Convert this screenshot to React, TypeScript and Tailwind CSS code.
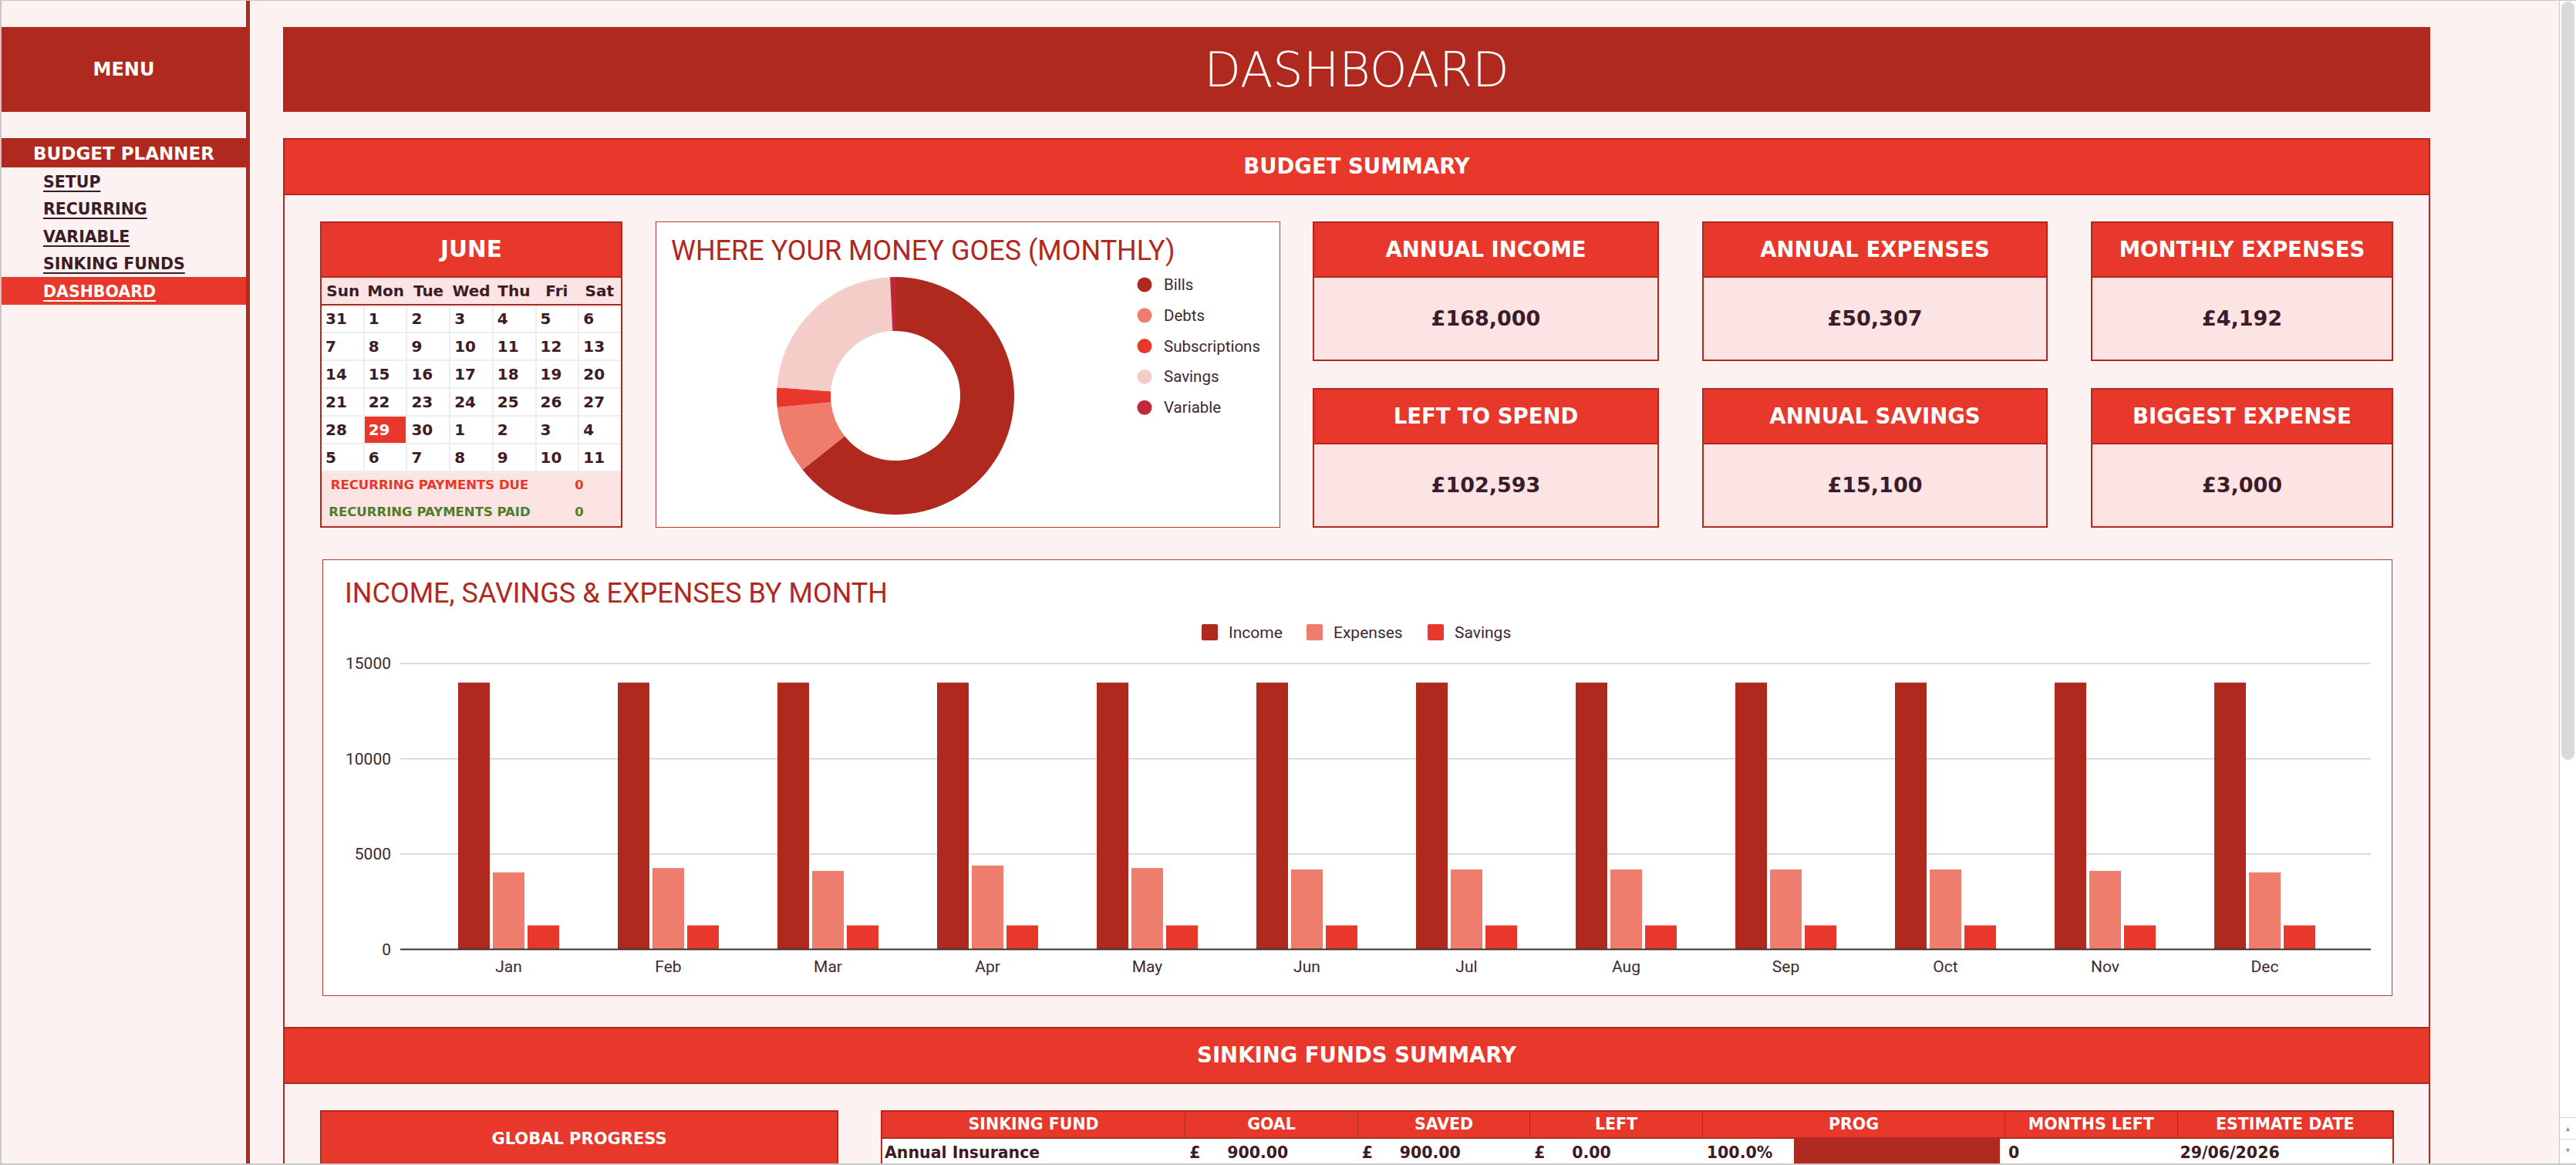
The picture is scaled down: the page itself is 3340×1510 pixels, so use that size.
import React from "react";

// palette used throughout the planner
// dark red  #b0291f   bright red #e8372b   salmon #ef7d6e   blush #f5cdc8

const MENU_ITEMS = ["SETUP", "RECURRING", "VARIABLE", "SINKING FUNDS", "DASHBOARD"];
const ACTIVE_ITEM = "DASHBOARD";

const WEEKDAYS = ["Sun", "Mon", "Tue", "Wed", "Thu", "Fri", "Sat"];
const WEEKS = [
  [31, 1, 2, 3, 4, 5, 6],
  [7, 8, 9, 10, 11, 12, 13],
  [14, 15, 16, 17, 18, 19, 20],
  [21, 22, 23, 24, 25, 26, 27],
  [28, 29, 30, 1, 2, 3, 4],
  [5, 6, 7, 8, 9, 10, 11],
];
const TODAY = { week: 4, day: 1 };

const KPIS = [
  { title: "ANNUAL INCOME", value: "£168,000" },
  { title: "ANNUAL EXPENSES", value: "£50,307" },
  { title: "MONTHLY EXPENSES", value: "£4,192" },
  { title: "LEFT TO SPEND", value: "£102,593" },
  { title: "ANNUAL SAVINGS", value: "£15,100" },
  { title: "BIGGEST EXPENSE", value: "£3,000" },
];

// donut slices, angles in degrees clockwise from 12 o'clock
const SLICES = [
  { label: "Bills", color: "#b0291f", from: 0, to: 231.5 },
  { label: "Debts", color: "#ef7d6e", from: 231.5, to: 264.4 },
  { label: "Subscriptions", color: "#e8372b", from: 264.4, to: 274 },
  { label: "Savings", color: "#f5cdc8", from: 274, to: 357.4 },
  { label: "Variable", color: "#c0283a", from: 357.4, to: 360 },
];

const MONTHS = ["Jan", "Feb", "Mar", "Apr", "May", "Jun", "Jul", "Aug", "Sep", "Oct", "Nov", "Dec"];
const INCOME = 14000;
const SAVINGS = 1258;
const EXPENSES = [4040, 4267, 4117, 4400, 4267, 4190, 4190, 4190, 4190, 4190, 4117, 4040];

const SERIES = [
  { label: "Income", color: "#b0291f" },
  { label: "Expenses", color: "#ef7d6e" },
  { label: "Savings", color: "#e8372b" },
];

function polar(cx: number, cy: number, r: number, deg: number) {
  const a = (deg * Math.PI) / 180;
  return [cx + r * Math.sin(a), cy - r * Math.cos(a)];
}

function ringSlice(cx: number, cy: number, R: number, r: number, from: number, to: number) {
  const large = to - from > 180 ? 1 : 0;
  const [x0, y0] = polar(cx, cy, R, from);
  const [x1, y1] = polar(cx, cy, R, to);
  const [x2, y2] = polar(cx, cy, r, to);
  const [x3, y3] = polar(cx, cy, r, from);
  return `M${x0} ${y0} A${R} ${R} 0 ${large} 1 ${x1} ${y1} L${x2} ${y2} A${r} ${r} 0 ${large} 0 ${x3} ${y3} Z`;
}

function Sidebar() {
  return (
    <aside className="w-[317px] shrink-0 pt-[34px] font-['DejaVu_Sans',sans-serif] font-bold">
      <div className="h-[110px] bg-[#b0291f] flex items-center justify-center text-white text-[24px]">
        MENU
      </div>
      <div className="mt-[34px] h-[38px] pt-[2px] bg-[#b0291f] flex items-center justify-center text-white text-[23px]">
        BUDGET PLANNER
      </div>
      {MENU_ITEMS.map((item) => {
        const active = item === ACTIVE_ITEM;
        return (
          <div
            key={item}
            className={
              active
                ? "h-[35.5px] pt-[3px] bg-[#e8372b] flex items-center pl-[54px] text-white text-[20.5px]"
                : "h-[35.5px] pt-[3px] flex items-center pl-[54px] text-[#3b1c27] text-[20.5px]"
            }
          >
            <span className="underline decoration-2 underline-offset-[4px]">{item}</span>
          </div>
        );
      })}
    </aside>
  );
}

function Calendar() {
  return (
    <div className="w-[392px] h-[397px] shrink-0 border-2 border-[#b0291f] flex flex-col font-['DejaVu_Sans',sans-serif] font-bold">
      <div className="h-[71px] bg-[#e8372b] border-b-2 border-[#b0291f] flex items-center justify-center text-white text-[29.5px]">
        JUNE
      </div>
      <div className="h-[36px] bg-[#fbe4e3] border-b-2 border-[#b0291f] grid grid-cols-7 items-center text-[#3b1c27] text-[20px]">
        {WEEKDAYS.map((d) => (
          <span key={d} className="text-center">
            {d}
          </span>
        ))}
      </div>
      <div className="grid grid-cols-7 gap-[2px] pb-[2px] bg-[#eeeeee] text-[20px] text-[#3b1c27]">
        {WEEKS.map((week, w) =>
          week.map((d, i) => {
            const today = w === TODAY.week && i === TODAY.day;
            return (
              <div
                key={`${w}-${i}`}
                className={
                  today
                    ? "h-[34px] bg-[#e8372b] text-white flex items-center pl-[5px]"
                    : "h-[34px] bg-white flex items-center pl-[5px]"
                }
              >
                {d}
              </div>
            );
          })
        )}
      </div>
      <div className="flex-1 bg-[#fbe4e3] grid grid-cols-[280px_1fr] grid-rows-2 items-center text-[16.5px]">
        <span className="text-center text-[#e8372b]">RECURRING PAYMENTS DUE</span>
        <span className="text-center text-[#e8372b]">0</span>
        <span className="text-center text-[#4e7d2b]">RECURRING PAYMENTS PAID</span>
        <span className="text-center text-[#4e7d2b]">0</span>
      </div>
    </div>
  );
}

function MoneyDonut() {
  const cx = 310;
  const cy = 170;
  return (
    <div className="w-[810px] h-[397px] shrink-0 bg-white border border-[#c4372c] flex flex-col font-['Roboto',sans-serif]">
      <div className="pt-[20px] pl-[19px] text-[36px] leading-[35px] text-[#b0291f]">
        WHERE YOUR MONEY GOES (MONTHLY)
      </div>
      <svg width="808" height="340" viewBox="0 0 808 340">
        {SLICES.map((s) => (
          <path key={s.label} d={ringSlice(cx, cy, 154, 84, s.from, s.to)} fill={s.color} />
        ))}
        {SLICES.map((s, i) => (
          <g key={s.label}>
            <circle cx={633} cy={26 + i * 39.8} r={9.5} fill={s.color} />
            <text x={658} y={26 + i * 39.8} dominantBaseline="central" fontSize={20.5} fill="#3b2a33">
              {s.label}
            </text>
          </g>
        ))}
      </svg>
    </div>
  );
}

function KpiCard({ title, value }: { title: string; value: string }) {
  return (
    <div className="h-[181px] border-2 border-[#b0291f] flex flex-col font-['DejaVu_Sans',sans-serif] font-bold">
      <div className="h-[71px] bg-[#e8372b] border-b-2 border-[#b0291f] flex items-center justify-center text-white text-[27.5px]">
        {title}
      </div>
      <div className="flex-1 bg-[#fbe4e3] flex items-center justify-center text-[#3b1c27] text-[27px]">
        {value}
      </div>
    </div>
  );
}

function MonthlyBars() {
  const base = 443.5;
  const perUnit = 123.5 / 5000;
  const y = (v: number) => base - v * perUnit;
  return (
    <div className="mt-[41px] ml-[3px] w-[2684px] h-[566px] bg-white border border-[#c4372c] flex flex-col font-['Roboto',sans-serif]">
      <div className="pt-[26px] pl-[28px] text-[36px] leading-[35px] text-[#b0291f]">
        INCOME, SAVINGS &amp; EXPENSES BY MONTH
      </div>
      <svg width="2682" height="503" viewBox="0 0 2682 503">
        {SERIES.map((s, i) => {
          const x = 1139 + [0, 136, 293][i];
          return (
            <g key={s.label}>
              <rect x={x} y={22} width={21} height={21} rx={2} fill={s.color} />
              <text x={x + 35} y={32.5} dominantBaseline="central" fontSize={21} fill="#3b2a33">
                {s.label}
              </text>
            </g>
          );
        })}
        {[15000, 10000, 5000].map((v) => (
          <g key={v}>
            <line x1={100} x2={2655} y1={y(v)} y2={y(v)} stroke="#d0d0d0" strokeWidth={1.5} />
            <text x={88} y={y(v)} textAnchor="end" dominantBaseline="central" fontSize={21} fill="#3b2a33">
              {v}
            </text>
          </g>
        ))}
        <text x={88} y={base} textAnchor="end" dominantBaseline="central" fontSize={21} fill="#3b2a33">
          0
        </text>
        {MONTHS.map((m, i) => {
          const x0 = 175 + i * 207;
          const values = [INCOME, EXPENSES[i], SAVINGS];
          return (
            <g key={m}>
              {values.map((v, k) => (
                <rect
                  key={k}
                  x={x0 + k * 45}
                  y={y(v)}
                  width={41}
                  height={base - y(v)}
                  fill={SERIES[k].color}
                />
              ))}
              <text x={x0 + 65.5} y={466} textAnchor="middle" dominantBaseline="central" fontSize={21} fill="#3b2a33">
                {m}
              </text>
            </g>
          );
        })}
        <line x1={100} x2={2655} y1={base} y2={base} stroke="#333333" strokeWidth={2} />
      </svg>
    </div>
  );
}

const FUND_COLUMNS = [
  { title: "SINKING FUND", width: "w-[393px]" },
  { title: "GOAL", width: "w-[224px]" },
  { title: "SAVED", width: "w-[224px]" },
  { title: "LEFT", width: "w-[224px]" },
  { title: "PROG", width: "w-[393px]" },
  { title: "MONTHS LEFT", width: "w-[224px]" },
  { title: "ESTIMATE DATE", width: "w-[280px]" },
];

function Money({ amount }: { amount: string }) {
  return (
    <span className="flex items-center">
      <span className="w-[55px] pl-[6px]">£</span>
      <span>{amount}</span>
    </span>
  );
}

function FundsTable() {
  return (
    <div className="w-[1962px] border-2 border-[#b0291f] font-['DejaVu_Sans',sans-serif] font-bold">
      <div className="h-[35px] bg-[#e8372b] border-b-2 border-[#b0291f] flex text-white text-[20.5px]">
        {FUND_COLUMNS.map((c, i) => (
          <div
            key={c.title}
            className={
              i === 0
                ? `${c.width} flex items-center justify-center`
                : `${c.width} flex items-center justify-center border-l border-[#b5291f]`
            }
          >
            {c.title}
          </div>
        ))}
      </div>
      <div className="h-[36px] bg-white flex items-center text-[#3b1c27] text-[20.5px]">
        <span className="w-[393px] pl-[3px]">Annual Insurance</span>
        <span className="w-[224px]">
          <Money amount="900.00" />
        </span>
        <span className="w-[224px]">
          <Money amount="900.00" />
        </span>
        <span className="w-[224px]">
          <Money amount="0.00" />
        </span>
        <span className="w-[393px] h-full flex items-center">
          <span className="w-[119px] pl-[6px]">100.0%</span>
          <span className="w-[267px] h-full bg-[#b0291f]" />
        </span>
        <span className="w-[224px] pl-[5px]">0</span>
        <span className="w-[280px] pl-[4px]">29/06/2026</span>
      </div>
    </div>
  );
}

function SectionBar({ title }: { title: string }) {
  return (
    <div className="h-[74px] shrink-0 bg-[#e8372b] border-y-2 border-[#b0291f] flex items-center justify-center text-white text-[27.5px] font-bold font-['DejaVu_Sans',sans-serif]">
      {title}
    </div>
  );
}

function Scrollbar() {
  return (
    <div className="w-[22px] shrink-0 border-l border-[#c6c6c6] bg-white flex flex-col">
      <div className="mt-[1px] mx-[2px] h-[983px] rounded-full bg-[#dadada]" />
      <div className="flex-1" />
      <div className="h-[28px] border-t border-[#d6d6d6] flex items-center justify-center text-[9px] text-[#9a9a9a]">
        ▲
      </div>
      <div className="h-[28px] mb-[4px] border-t border-[#d6d6d6] flex items-center justify-center text-[9px] text-[#9a9a9a]">
        ▼
      </div>
    </div>
  );
}

export default function App() {
  return (
    <div className="w-[3340px] h-[1510px] overflow-hidden bg-[#fcf2f2] border-t border-b-2 border-[#c8c8c8] flex">
      <div className="w-[2px] shrink-0 bg-[#c8c8c8]" />
      <Sidebar />
      <div className="w-[5px] shrink-0 bg-[#b0291f]" />
      <div className="w-[43px] shrink-0" />

      <main className="w-[2784px] shrink-0 pt-[34px] flex flex-col">
        <div className="h-[110px] shrink-0 bg-[#b0291f] flex items-center justify-center text-white text-[62px] font-extralight font-['DejaVu_Sans',sans-serif]">
          DASHBOARD
        </div>

        <section className="mt-[34px] flex-1 border-x-2 border-[#b0291f] flex flex-col">
          <SectionBar title="BUDGET SUMMARY" />
          <div className="px-[46px] pt-[34px] pb-[40px]">
            <div className="flex gap-[43px]">
              <Calendar />
              <MoneyDonut />
              <div className="ml-[-1px] grid grid-cols-[449px_448px_392px] gap-x-[56px] gap-y-[35px]">
                {KPIS.map((k) => (
                  <KpiCard key={k.title} title={k.title} value={k.value} />
                ))}
              </div>
            </div>
            <MonthlyBars />
          </div>

          <SectionBar title="SINKING FUNDS SUMMARY" />
          <div className="px-[46px] pt-[34px] flex gap-[55px]">
            <div className="w-[672px] h-[120px] shrink-0 border-2 border-[#b0291f] flex flex-col font-['DejaVu_Sans',sans-serif] font-bold">
              <div className="h-[72px] bg-[#e8372b] flex items-center justify-center text-white text-[21px]">
                GLOBAL PROGRESS
              </div>
            </div>
            <FundsTable />
          </div>
        </section>
      </main>

      <div className="w-[167px] shrink-0" />
      <Scrollbar />
    </div>
  );
}
